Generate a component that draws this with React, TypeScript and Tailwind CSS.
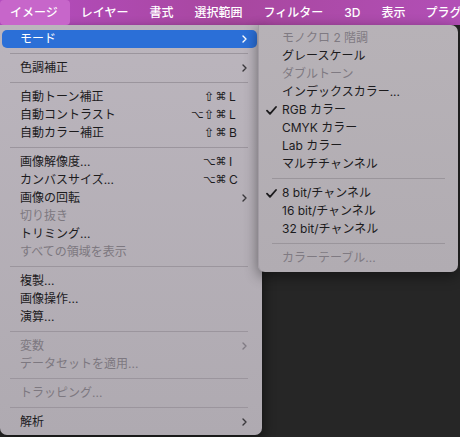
import React from 'react';

type Row =
  | { kind: 'sep' }
  | {
      kind: 'item';
      label: string;
      keys?: string[];
      sub?: boolean;
      off?: boolean;
      active?: boolean;
      check?: boolean;
    };

const sep: Row = { kind: 'sep' };
const it = (label: string, opts: Partial<Omit<Extract<Row, { kind: 'item' }>, 'kind' | 'label'>> = {}): Row => ({
  kind: 'item',
  label,
  ...opts,
});

const menubar = ['イメージ', 'レイヤー', '書式', '選択範囲', 'フィルター', '3D', '表示', 'プラグ'];

const mainRows: Row[] = [
  it('モード', { sub: true, active: true }),
  sep,
  it('色調補正', { sub: true }),
  sep,
  it('自動トーン補正', { keys: ['⇧', '⌘', 'L'] }),
  it('自動コントラスト', { keys: ['⌥', '⇧', '⌘', 'L'] }),
  it('自動カラー補正', { keys: ['⇧', '⌘', 'B'] }),
  sep,
  it('画像解像度...', { keys: ['⌥', '⌘', 'I'] }),
  it('カンバスサイズ...', { keys: ['⌥', '⌘', 'C'] }),
  it('画像の回転', { sub: true }),
  it('切り抜き', { off: true }),
  it('トリミング...'),
  it('すべての領域を表示', { off: true }),
  sep,
  it('複製...'),
  it('画像操作...'),
  it('演算...'),
  sep,
  it('変数', { sub: true, off: true }),
  it('データセットを適用...', { off: true }),
  sep,
  it('トラッピング...', { off: true }),
  sep,
  it('解析', { sub: true }),
];

const modeRows: Row[] = [
  it('モノクロ 2 階調', { off: true }),
  it('グレースケール'),
  it('ダブルトーン', { off: true }),
  it('インデックスカラー...'),
  it('RGB カラー', { check: true }),
  it('CMYK カラー'),
  it('Lab カラー'),
  it('マルチチャンネル'),
  sep,
  it('8 bit/チャンネル', { check: true }),
  it('16 bit/チャンネル'),
  it('32 bit/チャンネル'),
  sep,
  it('カラーテーブル...', { off: true }),
];

function Chevron({ white, off }: { white?: boolean; off?: boolean }) {
  const c = white ? 'text-white' : off ? 'text-[#807b84]' : 'text-[#3a383c]';
  return (
    <svg className={`w-[5px] h-[8px] ml-auto ${c}`} viewBox="0 0 5 8" fill="none">
      <path d="M1 1l3 3-3 3" stroke="currentColor" strokeWidth="1.4" strokeLinecap="round" strokeLinejoin="round" />
    </svg>
  );
}

function Check() {
  return (
    <svg className="absolute left-[7px] top-[5px] w-[11px] h-[9px] text-[#1c1b1d]" viewBox="0 0 11 9" fill="none">
      <path d="M1 4.6L4 7.8L10 1" stroke="currentColor" strokeWidth="1.8" strokeLinecap="round" strokeLinejoin="round" />
    </svg>
  );
}

function Keys({ keys }: { keys: string[] }) {
  const mods = keys.slice(0, -1);
  const letter = keys[keys.length - 1];
  return (
    <div className="ml-auto flex items-center text-[#1c1b1d]">
      {mods.map((k, i) => (
        <span
          key={i}
          className={`w-[12px] text-center font-['DejaVu_Sans',sans-serif] leading-[18px] ${
            k === '⇧' ? 'text-[13px]' : 'text-[11px]'
          }`}
        >
          {k}
        </span>
      ))}
      <span className="w-[9px] pl-[2px] text-[12px] leading-[18px]">{letter}</span>
    </div>
  );
}

function MainRow({ row }: { row: Row }) {
  if (row.kind === 'sep') {
    return (
      <div className="h-[11px] flex items-center ml-[10px] mr-[14px]">
        <div className="h-px w-full bg-[#9b959d]" />
      </div>
    );
  }
  const text = row.active ? 'text-white' : row.off ? 'text-[#7d7880]' : 'text-[#1c1b1d]';
  return (
    <div
      className={`h-[18px] ml-[2px] mr-[5px] flex items-center pl-[18px] rounded-[5px] ${
        row.active ? 'bg-[#2b6fd7]' : ''
      } ${row.sub ? 'pr-[10px]' : 'pr-[21px]'}`}
    >
      <span className={`text-[12px] leading-[18px] whitespace-nowrap ${text}`}>{row.label}</span>
      {row.keys && <Keys keys={row.keys} />}
      {row.sub && <Chevron white={row.active} off={row.off} />}
    </div>
  );
}

function SubRow({ row }: { row: Row }) {
  if (row.kind === 'sep') {
    return (
      <div className="h-[11px] flex items-center mx-[13px]">
        <div className="h-px w-full bg-[#9a959b]" />
      </div>
    );
  }
  return (
    <div className="relative h-[18px] flex items-center pl-[23px]">
      {row.check && <Check />}
      <span className={`text-[12px] leading-[18px] whitespace-nowrap ${row.off ? 'text-[#7f7a82]' : 'text-[#1c1b1d]'}`}>
        {row.label}
      </span>
    </div>
  );
}

export default function App() {
  return (
    <div className="relative w-[460px] h-[437px] overflow-hidden bg-[#262626] font-['Inter','Noto_Sans_CJK_JP',sans-serif]">
      {/* メニューバー */}
      <div className="h-[25px] flex items-stretch gap-[1px] whitespace-nowrap bg-gradient-to-r from-[#b44cc0] via-[#a8479f] to-[#b24fb6]">
        {menubar.map((m, i) => (
          <div
            key={m}
            className={`flex items-center text-[12px] font-medium text-white ${
              i === 0
                ? 'pl-[10px] pr-[12px] bg-[#c766ca] rounded-[4px]'
                : i === menubar.length - 1
                  ? 'pl-[9px]'
                  : 'px-[10px]'
            }`}
          >
            {m}
          </div>
        ))}
      </div>

      {/* イメージ メニュー */}
      <div className="w-[262px] h-[410px] pt-[5px] rounded-b-[7px] bg-gradient-to-b from-[#bbb5bd] to-[#afaab1] shadow-[2px_4px_12px_rgba(0,0,0,0.45)]">
        {mainRows.map((r, i) => (
          <MainRow key={i} row={r} />
        ))}
      </div>

      {/* モード サブメニュー */}
      <div className="absolute left-[258px] top-[25px] w-[200px] h-[247px] pt-[4px] rounded-[7px] rounded-tl-none bg-gradient-to-b from-[#b7b2b7] to-[#b1acb2] shadow-[0_4px_14px_rgba(0,0,0,0.45)] border-l border-[#a29ca4]">
        {modeRows.map((r, i) => (
          <SubRow key={i} row={r} />
        ))}
      </div>
    </div>
  );
}
